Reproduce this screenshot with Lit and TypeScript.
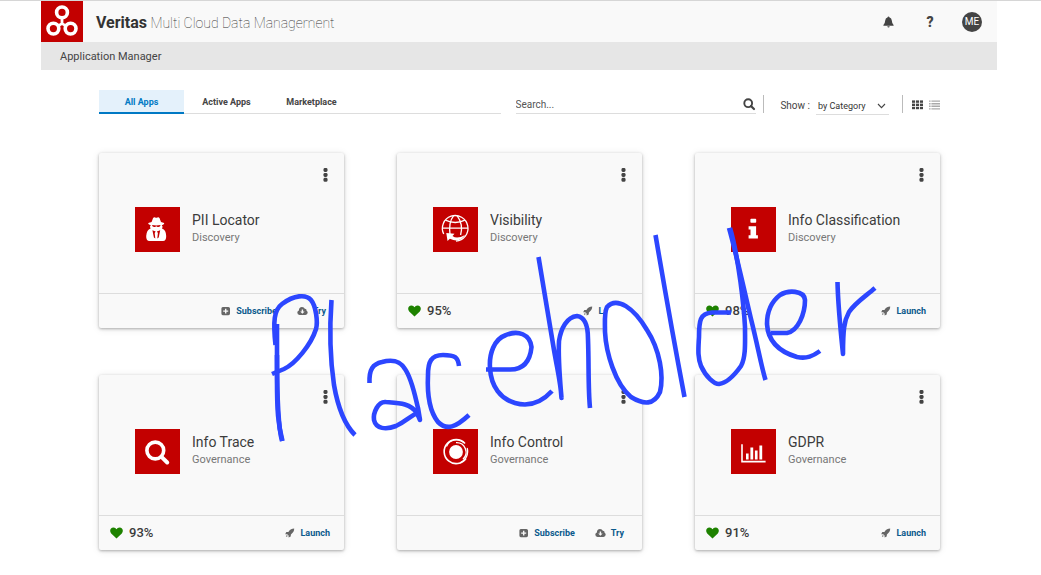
import { LitElement, html, css, svg, nothing, type TemplateResult } from "lit";
import { customElement, property, state } from "lit/decorators.js";
import { classMap } from "lit/directives/class-map.js";

interface AppInfo {
  name: string;
  category: string;
  icon: string;
  health?: number;
}

const APPS: AppInfo[] = [
  { name: "PII Locator", category: "Discovery", icon: "spy" },
  { name: "Visibility", category: "Discovery", icon: "globe", health: 95 },
  { name: "Info Classification", category: "Discovery", icon: "info", health: 98 },
  { name: "Info Trace", category: "Governance", icon: "search", health: 93 },
  { name: "Info Control", category: "Governance", icon: "rings" },
  { name: "GDPR", category: "Governance", icon: "chart", health: 91 },
];

// Tile pictograms share a 45 x 45 canvas.
const TILE_ICONS: Record<string, TemplateResult> = {
  spy: svg`
    <path fill="#fff" d="M16.6 15 L18 11.2 Q18.800 9.800 20.200 10.400 Q21.300 11 22.400 10.400 Q23.800 9.800 24.600 11.200 L26 15 Q29.500 15.800 29.200 16.800 Q28.800 17.800 26.800 18.200 Q28.400 19.400 27 21.400 Q31 22.600 31.200 29 Q31.300 34 28 34 H14.5 Q11 34 11.2 29 Q11.600 22.600 15.600 21.400 Q14.200 19.400 15.800 18.200 Q13.600 17.800 13.200 16.800 Q13 15.800 16.600 15Z"/>
    <path fill="#c30000" d="M17 18 Q21.300 18.800 25.600 18 Q25.200 20.400 22.600 19.900 L21.300 19.200 L20 19.900 Q17.400 20.400 17 18Z M17.400 23.300 L20.700 24.600 L19.700 26 L20.300 31.400 L18.900 30.600Z M25.200 23.300 L21.900 24.600 L22.900 26 L22.300 31.400 L23.700 30.600Z"/>`,
  globe: svg`
    <g fill="none" stroke="#fff" stroke-width="1.3">
      <path d="M10.7 27 A12.8 12.8 0 1 1 23 34.1"/>
      <path d="M9.5 21.2 H35 M12.4 13.2 Q22.3 17.8 32 13.2"/>
      <path d="M20.5 8.8 Q15.5 15 17 27.5 M24.2 8.8 Q30.5 17 27.6 28"/>
    </g>
    <path fill="#fff" d="M13.3 26 L21.5 26.800 L19.500 29 Q24 32.500 32 28 Q27 36.300 16.900 31.800 L14.500 34Z"/>`,
  info: svg`<path fill="#fff" d="M20.2 11.7 H24.4 Q25.2 11.7 25.2 12.5 V15 Q25.2 15.8 24.4 15.8 H20.2 Q19.4 15.8 19.4 15 V12.5 Q19.4 11.7 20.2 11.7Z M17.6 19.2 H25.1 V28.2 H26.9 V31.6 H17.6 V28.2 H19.5 V22.5 H17.6Z"/>`,
  search: svg`
    <circle cx="20.3" cy="21.5" r="8.4" fill="none" stroke="#fff" stroke-width="3.6"/>
    <path d="M26.5 27.8 L32.2 33.5" stroke="#fff" stroke-width="4" stroke-linecap="round"/>`,
  rings: svg`
    <circle cx="23" cy="23" r="6.9" fill="#fff"/>
    <g fill="none" stroke="#fff">
      <path stroke-width="1.6" d="M32 14.5 A12 12 0 1 0 33 29.5"/>
      <path stroke-width="1.2" d="M31 13.6 A11 11 0 0 0 13.5 17.5 M34.2 19 A12 12 0 0 1 27 33.7"/>
      <path stroke-width="1.4" d="M23 13.600 A9.600 9.600 0 0 1 30 30.200"/>
    </g>`,
  chart: svg`
    <path fill="none" stroke="#fff" stroke-width="1.6" d="M11 15.3 V32.6 H34.6"/>
    <path fill="#fff" d="M15 24.5 H17.6 V30.6 H15Z M19.4 18.4 H22.2 V30.6 H19.4Z M23.9 21.4 H26.6 V30.6 H23.9Z M28.4 16.6 H31.2 V30.6 H28.4Z"/>`,
};

const heart = svg`<path fill="#1e8200" d="M6.5 11.6 L1.2 6.5 C-.9 4 .4 .5 3.4 .5 C5 .5 5.9 1.4 6.5 2.3 C7.1 1.4 8 .5 9.6 .5 C12.6 .5 13.9 4 11.8 6.5Z"/>`;
const plusBox = svg`<path fill="#666" fill-rule="evenodd" d="M1.8 1 H7.4 Q9 1 9 2.6 V7.6 Q9 9.2 7.4 9.2 H1.8 Q.4 9.2 .4 7.6 V2.6 Q.4 1 1.8 1Z M4 2.7 V4.4 H2.2 V5.8 H4 V7.5 H5.4 V5.8 H7.2 V4.4 H5.4 V2.7Z"/>`;
const cloud = svg`<path fill="#666" fill-rule="evenodd" d="M2.6 9 Q.3 8.8 .3 6.6 Q.4 4.9 1.9 4.4 Q1.9 1 5 .9 Q7.1 .9 7.8 2.8 Q9.7 2.7 9.6 4.7 Q10.7 5.3 10.7 6.8 Q10.5 8.8 8.4 9Z M4.7 3.4 V5.4 H3.2 L5.4 7.7 L7.6 5.4 H6.1 V3.4Z"/>`;
const rocket = svg`<path fill="#666" d="M9.2 .6 Q9.3 4 5.9 6.4 L5.7 8.6 L3.6 9.6 L3.6 7.6 L2.2 6.2 L.2 6.2 L1.3 4.1 L3.4 3.9 Q5.8 .6 9.2 .6Z M1.7 6.9 L2.9 8.1 L.9 8.9Z"/>`;
const magnifier = svg`<circle cx="5.2" cy="5.2" r="3.9" fill="none" stroke="#444" stroke-width="1.9"/><path d="M8 8 L11 11" stroke="#444" stroke-width="2.2" stroke-linecap="round"/>`;

@customElement("app-card")
export class AppCard extends LitElement {
  @property({ attribute: false }) app!: AppInfo;

  static styles = css`
    :host {
      display: flex;
      flex-direction: column;
      background: #f9f9f9;
      border-radius: 2px;
      box-shadow: 0 1px 3px rgba(0, 0, 0, 0.3), 0 1px 8px rgba(0, 0, 0, 0.09);
      color: #3c3c3c;
    }
    svg {
      display: block;
      flex: none;
    }
    button {
      font: inherit;
      color: inherit;
      background: none;
      border: 0;
      padding: 0;
      margin: 0;
      cursor: pointer;
    }
    .top {
      display: flex;
      justify-content: flex-end;
      padding: 14px 16px 0;
    }
    .main {
      display: flex;
      align-items: center;
      gap: 12px;
      padding: 25px 12px 41px 36px;
    }
    .tile {
      background: #c30000;
    }
    .label {
      padding-bottom: 4px;
    }
    .name {
      margin: 0;
      font-size: 14px;
      line-height: 20px;
      font-weight: 400;
      white-space: nowrap;
    }
    .category {
      margin: 0;
      font-size: 11px;
      line-height: 16px;
      color: #777;
    }
    .foot {
      display: flex;
      align-items: center;
      justify-content: space-between;
      height: 34px;
      padding: 0 14px 0 11px;
      border-top: 1px solid #ddd;
    }
    .health {
      display: flex;
      align-items: center;
      gap: 6px;
      font-size: 13px;
      line-height: 16px;
      font-weight: 500;
    }
    .actions {
      display: flex;
      gap: 20px;
      margin-left: auto;
    }
    .trial {
      padding-right: 4px;
    }
    .action {
      display: flex;
      align-items: center;
      gap: 5px;
      font-size: 9px;
      line-height: 12px;
      font-weight: 700;
      color: #0b5a8c;
    }
  `;

  render() {
    const { name, category, icon, health } = this.app;
    return html`
      <div class="top">
        <button aria-label="More options for ${name}">
          <svg width="5" height="15" viewBox="0 0 5 15" fill="#444">
            <rect x=".5" y="1" width="4" height="4" rx="1.4" />
            <rect x=".5" y="5.9" width="4" height="4" rx="1.4" />
            <rect x=".5" y="10.8" width="4" height="4" rx="1.4" />
          </svg>
        </button>
      </div>
      <div class="main">
        <svg class="tile" width="45" height="45" viewBox="0 0 45 45" aria-hidden="true">${TILE_ICONS[icon]}</svg>
        <div class="label">
          <h2 class="name">${name}</h2>
          <p class="category">${category}</p>
        </div>
      </div>
      <div class="foot">
        ${health === undefined
          ? nothing
          : html`<div class="health">
              <svg width="13" height="12" viewBox="0 0 13 12" aria-hidden="true">${heart}</svg>
              ${health}%
            </div>`}
        <div class=${classMap({ actions: true, trial: health === undefined })}>
          ${health === undefined
            ? html`<button class="action"><svg width="10" height="10" aria-hidden="true">${plusBox}</svg>Subscribe</button>
                <button class="action"><svg width="11" height="10" aria-hidden="true">${cloud}</svg>Try</button>`
            : html`<button class="action"><svg width="10" height="10" aria-hidden="true">${rocket}</svg>Launch</button>`}
        </div>
      </div>
    `;
  }
}

@customElement("app-root")
export class AppRoot extends LitElement {
  @state() private tab = "All Apps";

  static styles = css`
    :host {
      display: block;
      position: relative;
      box-sizing: border-box;
      min-height: 100vh;
      overflow: hidden;
      padding: 0 44px 24px 41px;
      border-top: 1px solid #d6d6d6;
      background: #fff;
      color: #444;
      font-family: Roboto, "Liberation Sans", sans-serif;
    }
    * {
      box-sizing: border-box;
    }
    svg {
      display: block;
      flex: none;
    }
    button {
      font: inherit;
      color: inherit;
      background: none;
      border: 0;
      padding: 0;
      margin: 0;
      cursor: pointer;
    }
    .header {
      display: flex;
      align-items: center;
      height: 41px;
      padding-right: 15px;
      background: #f9f9f9;
    }
    .brand {
      margin: 0 auto 0 13px;
      padding-top: 2px;
      font-size: 14px;
      line-height: 20px;
      font-weight: 100;
      color: #333;
      white-space: nowrap;
    }
    .brand strong {
      font-size: 16px;
      font-weight: 700;
    }
    .tools {
      display: flex;
      align-items: center;
    }
    .tools button {
      display: flex;
      align-items: center;
      justify-content: center;
      width: 42px;
      height: 20px;
      font-size: 14px;
      font-weight: 900;
    }
    .tools .avatar {
      width: 20px;
      margin-left: 11px;
      border-radius: 50%;
      background: #444;
      color: #fff;
      font-size: 10px;
      font-weight: 400;
    }
    .title {
      margin: 0;
      padding: 1px 19px 0;
      background: #e6e6e6;
      font-size: 11px;
      line-height: 27px;
      font-weight: 400;
    }
    .content {
      padding: 20px 57px 0 58px;
    }
    .bar {
      display: flex;
      align-items: flex-start;
      height: 24px;
    }
    .tabs {
      display: flex;
      flex: 5;
      height: 24px;
      border-bottom: 1px solid #ddd;
      font-size: 9px;
      font-weight: 700;
    }
    .tab {
      width: 85px;
      height: 24px;
      padding-top: 2px;
      border-bottom: 2px solid transparent;
    }
    .tab.on {
      background: #e4f1fb;
      border-color: #0079c4;
      color: #0079c4;
    }
    .search {
      display: flex;
      flex: 3;
      align-items: center;
      height: 18px;
      margin: 6px 7px 0 15px;
      border-bottom: 1px solid #ddd;
    }
    .search input {
      flex: 1;
      min-width: 0;
      padding: 1px 0 0;
      border: 0;
      outline: 0;
      background: none;
      font: 10px/16px Roboto, sans-serif;
      color: #444;
    }
    .search input::placeholder {
      color: #555;
      opacity: 1;
    }
    .divider {
      width: 1px;
      height: 18px;
      margin-top: 5px;
      background: #bbb;
    }
    .show {
      display: flex;
      gap: 6px;
      margin: 7px 13px 0 16px;
      font-size: 10px;
      line-height: 18px;
    }
    .select {
      display: flex;
      align-items: center;
      border-bottom: 1px solid #ddd;
      padding-right: 3px;
    }
    .select select {
      width: 61px;
      padding: 0 2px;
      border: 0;
      outline: 0;
      background: none;
      appearance: none;
      font: 9px/16px Roboto, sans-serif;
      color: #333;
    }
    .views {
      display: flex;
      gap: 6px;
      margin: 10px 0 0 9px;
    }
    .cards {
      display: grid;
      grid-template-columns: repeat(3, 1fr);
      gap: 47px 53px;
      margin-top: 39px;
    }
    .ink {
      position: absolute;
      left: 260px;
      top: 219px;
      pointer-events: none;
    }
  `;

  render() {
    return html`
      <header class="header">
        <svg width="42" height="41" viewBox="0 0 42 41" role="img" aria-label="Veritas logo">
          <rect width="42" height="41" fill="#c30000" />
          <g fill="none" stroke="#fff" stroke-width="3.6">
            <circle cx="21" cy="11.4" r="5.4" />
            <circle cx="12.4" cy="27.6" r="5.4" />
            <circle cx="29.6" cy="27.600" r="5.4" />
            <path stroke-width="2.8" d="M21 23 V16 M21 22.600 L16 25.400 M21 22.600 L26 25.400" />
          </g>
        </svg>
        <h1 class="brand"><strong>Veritas</strong> Multi Cloud Data Management</h1>
        <div class="tools">
          <button aria-label="Notifications">
            <svg width="11" height="12" viewBox="0 0 11 12" fill="#444">
              <path d="M5.5 .4 Q6.3 .4 6.3 1.3 Q8.7 2 8.8 4.6 Q8.9 7.6 10.6 9 V9.8 H.4 V9 Q2.1 7.6 2.2 4.6 Q2.3 2 4.7 1.3 Q4.7 .4 5.5 .4Z M4.3 10.2 H6.7 Q6.5 11.5 5.5 11.5 Q4.5 11.5 4.3 10.2Z" />
            </svg>
          </button>
          <button aria-label="Help">?</button>
          <button class="avatar">ME</button>
        </div>
      </header>
      <h2 class="title">Application Manager</h2>
      <main class="content">
        <div class="bar">
          <nav class="tabs">
            ${["All Apps", "Active Apps", "Marketplace"].map(
              (name) => html`<button
                class=${classMap({ tab: true, on: this.tab === name })}
                @click=${() => (this.tab = name)}
              >${name}</button>`
            )}
          </nav>
          <div class="search">
            <input type="text" placeholder="Search..." aria-label="Search" />
            <button aria-label="Run search"><svg width="13" height="13">${magnifier}</svg></button>
          </div>
          <div class="divider"></div>
          <div class="show">
            <label for="group">Show :</label>
            <div class="select">
              <select id="group"><option>by Category</option></select>
              <svg width="9" height="6" fill="none" stroke="#444" stroke-width="1.1" aria-hidden="true"><path d="M1 1 L4.5 4.7 L8 1" /></svg>
            </div>
          </div>
          <div class="divider"></div>
          <div class="views">
            <button aria-label="Grid view">
              <svg width="11" height="10" fill="#444">
                ${[0.4, 3.6, 6.8].map((y) => [0, 4, 8].map((x) => svg`<rect x=${x} y=${y} width="3.1" height="2.4" />`))}
              </svg>
            </button>
            <button aria-label="List view">
              <svg width="11" height="10" fill="#aaa">
                ${[0.4, 3, 5.6, 8.2].map((y) => svg`<path d="M0 ${y} h1.6 v1.4 h-1.6z M2.4 ${y} h8.600 v1.4 h-8.600z" />`)}
              </svg>
            </button>
          </div>
        </div>
        <section class="cards">${APPS.map((app) => html`<app-card .app=${app}></app-card>`)}</section>
      </main>
      <svg class="ink" width="630" height="230" viewBox="0 0 630 230" role="img" aria-label="Placeholder" fill="none" stroke="#2c46ff" stroke-width="4.600" stroke-linejoin="round">
        <path d="M17 104 C17 130 17 150 17 160 C17 190 18 205 22.5 221" />
        <path d="M17 135 C17 180 19 210 22 221" />
        <path d="M15.500 125 C13 101 14 90 22 84 C34 75 46 74 51 80 C56 86 58 102 56 109 C51 125 35 144 24 149 L12 154" />
        <path d="M71.500 80 C69 115 71 145 74 165 C78 188 85 205 95 215" />
        <path d="M109.500 163 C109 149 113 144 122 142 C133 139 140 141 145 149 C152 159 155 176 158 188 L160 200 L157 193 C150 183 139 183 126 182 C118 181 113 193 114 200 C116 209 126 210 136 206 C145 202 149 197 157 193" />
        <path d="M199 146 C198 137 195 135 183 135 C171 135 168 142 168 155 C167 175 170 192 178 202 C187 211 196 207 209 195" />
        <path d="M226 149.500 H249 C263 150 270 142 271.500 127 C270 114 258 110 246 115 C234 119 229 134 230 148 C231 167 241 179 255 183 C269 187 281 183 292 171" />
        <path d="M278.500 37 C283 63 289 101 294 130 C298 153 301 165 301.500 178 C300 160 298 140 299 121 C301 108 307 97 317 96 C325 97 328 106 328 119 C329 145 328 168 330 188" />
        <path fill="#fff" d="M347 87 C357 76 374 88 387 110 C400 130 404 156 400 172 C394 185 384 185 371 177 C355 164 346 132 345 112 C345 101 344 93 347 87Z" />
        <path d="M395.500 15 C404 65 415 127 424.500 177" />
        <path d="M471 92.500 H452 C440 93 439 101 439 117 C438 132 438 138 441 146 C446 157 454 164 459 164 C467 163 476 153 481 146 C486 137 485 122 485 107 C484 88 479 39 470 8" />
        <path d="M469 8 C476 33 484 69 491 99 C498 127 501 145 505.500 160" />
        <path d="M511 113 H527 C538 111 545 94 545 80 C544 70 528 70 520 75 C511 82 507 91 507 104 C508 122 520 132 537 137 C547 139 553 136 560 131" />
        <path d="M577.500 62 C578 86 580 105 583 134 C583 110 584 101 589 92 C596 82 606 76 615 68" />
      </svg>
    `;
  }
}
